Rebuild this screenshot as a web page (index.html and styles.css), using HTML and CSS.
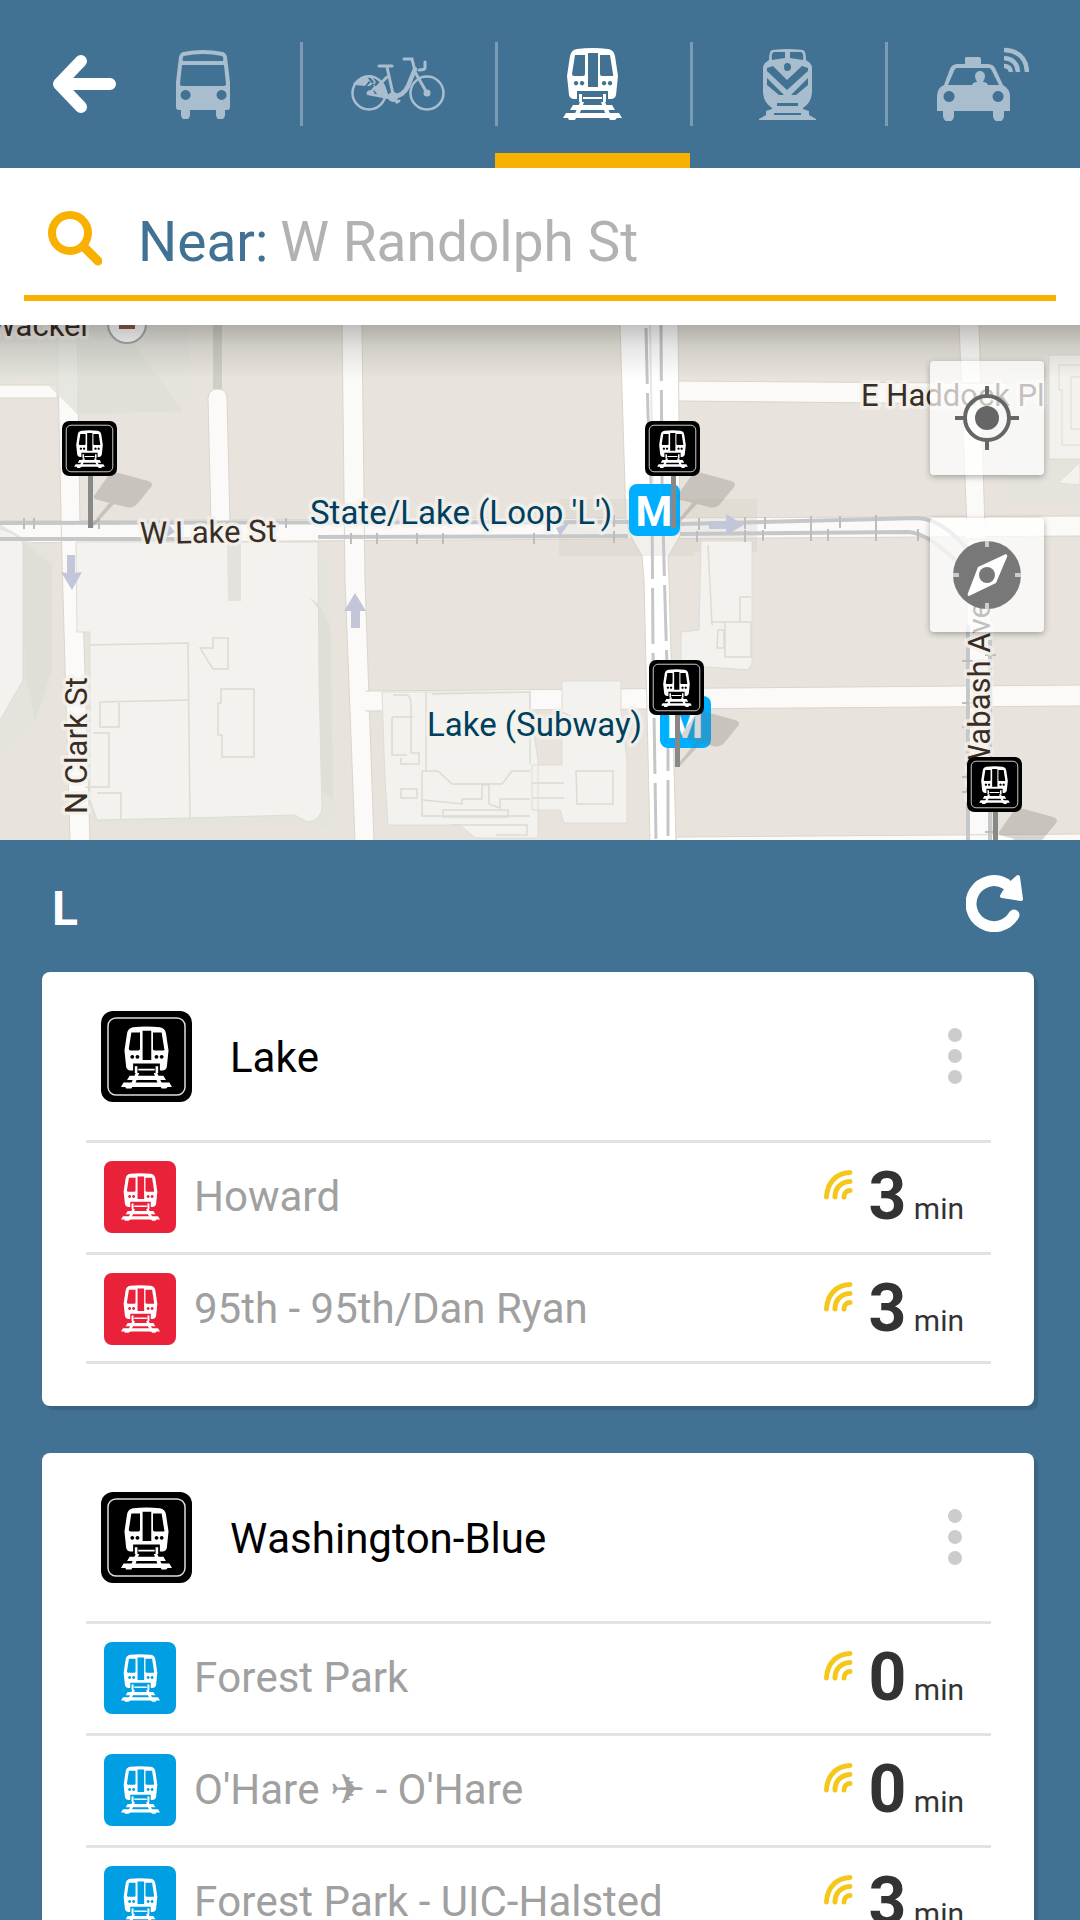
FILE: index.html
```html
<!DOCTYPE html>
<html lang="en">
<head>
<meta charset="utf-8">
<meta name="viewport" content="width=device-width, initial-scale=1">
<title>Nearby L stops</title>
<link rel="stylesheet" href="styles.css">
</head>
<body>
<svg class="sprite" aria-hidden="true">
  <symbol id="train" viewBox="0 0 59 72">
    <path fill-rule="evenodd" d="M14 1Q29.500-1 45 1Q51 2 52 8L55 28L53 47Q52 51 48 51H45V43H14V51H11Q7 51 6 47L4 28L7 8Q8 2 14 1ZM12 7L9 26Q9 28 11 28H20Q22 28 22 26V7ZM25 5V39H35V5ZM37 7V26Q37 28 39 28H49Q51 28 50 26L47 7ZM13 33a2.200 2.200 0 1 0 .1 0ZM19 33a2.200 2.200 0 1 0 .1 0ZM41 33a2.200 2.200 0 1 0 .1 0ZM47 33a2.200 2.200 0 1 0 .1 0Z"/>
    <path d="M16 46h3v8h-3zM40 46h3v8h-3zM20 49h19v2H20zM10 57H49L52 62H7ZM3 65H56L59 70H54L52 72H47L46 70H13L12 72H6L5 70H0Z"/>
    <path d="M17 54h4l-6 16h-5zM38 54h4l7 16h-5z"/>
  </symbol>
  <symbol id="badge" viewBox="0 0 91 91">
    <rect width="91" height="91" rx="12" fill="#000"/>
    <rect x="7" y="7" width="77" height="77" rx="8" fill="none" stroke="#ddd" stroke-width="1.500"/>
    <use href="#train" x="20" y="15" width="51" height="63" fill="#fff"/>
  </symbol>
  <symbol id="signal" viewBox="0 0 29 30">
    <g fill="none" stroke="#f5c71c" stroke-width="5" stroke-linecap="round"><path d="M2.500 27C3 13 12 3 26 2.500M11 27C11 18 17 12 26 11.500M20 27C20 23 23 20.500 26 20.500"/></g>
  </symbol>
</svg>

<div class="app">
  <header class="topbar">
    <button class="back" aria-label="Back">
      <svg width="64" height="58" viewBox="0 0 64 58" fill="none" stroke="#fff" stroke-width="12" stroke-linecap="round" stroke-linejoin="round"><path d="M57 29H10M28 6L6 29L28 52"/></svg>
    </button>
    <nav class="tabs" aria-label="Transit modes">
      <button class="tab" aria-label="Bus">
        <svg width="54" height="69" viewBox="0 0 54 69"><path fill-rule="evenodd" d="M7 2Q27-2 47 2Q50 3 51 7L54 32V57Q54 60 51 60H49V65A4.500 4.500 0 0 1 40 65V60H14V65A4.500 4.500 0 0 1 5 65V60H3Q0 60 0 57V32L3 7Q4 3 7 2ZM8 6Q27 2 46 6Q48 7 47 11H7Q6 7 8 6ZM6 15H48L50 34Q50 36 48 36H6Q4 36 4 34ZM9.500 40a5 5 0 1 0 .1 0ZM45.500 40a5 5 0 1 0 .1 0Z"/></svg>
      </button>
      <button class="tab" aria-label="Bike">
        <svg width="94" height="54" viewBox="0 0 94 54"><g fill="none" stroke="currentColor" stroke-width="2.500"><circle cx="18" cy="36" r="16.500"/><circle cx="76" cy="36" r="16.500"/></g><path fill-rule="evenodd" d="M2 27Q10 17 20 18Q33 22 37 37L42 39V43L16 38Q15 33 20 33L24 28L18 24L14 29L4 28ZM16 20L20 25L16 29H19L23 25L19 20ZM21 20L25 25L22 29H25L29 25L25 20ZM23 33L26 37H21Z"/><g fill="none" stroke="currentColor" stroke-linecap="round"><path stroke-width="3" d="M28 9H41M36 10L42 37M17 36H22"/><path stroke-width="4.500" d="M41 39Q52 40 57 29L64 12"/><path stroke-width="3" d="M53 2H61L64 14M64 15L76 36M74 5V11Q74 13 68 13M36 20L30 26"/><path stroke-width="3" d="M42 40L46 45L48 44"/></g><circle cx="76" cy="36" r="3.500"/><circle cx="42" cy="40" r="5"/></svg>
      </button>
      <button class="tab tab-active" aria-label="L" aria-current="page">
        <svg width="59" height="72"><use href="#train"/></svg>
      </button>
      <button class="tab" aria-label="Metra">
        <svg width="57" height="71" viewBox="0 0 57 71"><path fill-rule="evenodd" d="M13 1Q28-1 44 1Q47 2 47 11L51 14Q53 16 53 20V44Q52 54 44 59V60L50 62V66L57 70V71H0V70L7 66V62L13 60V59Q5 54 4 44V20Q4 16 6 14L10 11Q10 2 13 1ZM15 3Q12 4 13 11L26 9V3ZM31 3V9L44 11Q45 4 42 3ZM28 14Q25 14 25 18Q25 22 28 22Q32 22 32 18Q32 14 28 14ZM8 19L14 17L28 31L43 17L49 19V22L28 41L8 22ZM8 29L25 46H20L8 36ZM49 29L32 46H37L49 36ZM18 54V57H39V54ZM15 64V66H42V64Z"/></svg>
      </button>
      <button class="tab" aria-label="Taxi">
        <svg width="93" height="74" viewBox="0 0 93 74"><path fill-rule="evenodd" d="M30 10H43Q45 10 45 12V17H52Q58 17 60 23L67 38Q74 42 74 49V64H68V69A5.500 5.500 0 0 1 57 69V64H18V69A5.500 5.500 0 0 1 7 69V64H1V49Q1 41 8 38L14 22Q16 17 22 17H29V12Q29 10 30 10ZM21 21Q19 21 18 24L12 38H36Q37 35 41 35Q39 32 39 29A5 5 0 0 1 49 29Q49 32 47 35Q51 35 52 38H63L56 24Q55 21 53 21ZM13 44a5.500 5.500 0 1 0 .1 0ZM62 44a5.500 5.500 0 1 0 .1 0Z"/><g fill="none" stroke="currentColor" stroke-width="4.500"><path d="M68 3Q90 4 91 25M68 11Q81 12 82 25M68 19Q74 19 75 25"/></g></svg>
      </button>
    </nav>
  </header>

  <div class="search">
    <div class="search-field">
      <svg class="search-icon" width="55" height="56" viewBox="0 0 55 56" fill="none" stroke="#f8b100" stroke-linecap="round"><circle cx="23" cy="23" r="18" stroke-width="8"/><path d="M37 37L51 51" stroke-width="9"/></svg>
      <label for="near">Near:</label>
      <input id="near" type="text" value="W Randolph St">
    </div>
  </div>

  <section class="map" aria-label="Map">
    <svg class="map-canvas" viewBox="0 325 1080 515" preserveAspectRatio="xMidYMid slice">
      <defs>
        <linearGradient id="shade" x1="0" y1="0" x2="0" y2="1"><stop offset="0" stop-color="#000" stop-opacity=".24"/><stop offset=".4" stop-color="#000" stop-opacity=".1"/><stop offset="1" stop-color="#000" stop-opacity="0"/></linearGradient>
        <g id="pin">
          <path d="M32 75L46 55Q50 50 57 52L86 60Q92 62 89 66L76 82Q71 88 64 86L36 79Q31 78 32 75ZM29 104L48 81L52 83L31 106Z" fill="#777068" fill-opacity=".28"/>
          <rect x="26" y="53" width="5" height="54" fill="#888"/>
          <use href="#badge" width="55" height="55"/>
        </g>
      </defs>
      <rect y="325" width="1080" height="515" fill="#e8e4dd"/>
      <!-- streets -->
      <g fill="#fbfaf8" stroke="#dbd5c9" stroke-width="1">
        <path d="M-2 385H57V398H-2ZM-2 521L1082 516V536L-2 543Z"/>
        <path d="M57 325H77L80 523L84 640L90 842H70L62 560Z"/>
        <path d="M208 398Q209 389 217 389Q227 389 227 398L230 523H211Z"/>
        <path d="M342 323H362L365 580L374 842H355L345 580Z"/>
        <path d="M959 323H979L985 530H967ZM967 540H991V842H967Z"/>
        <path d="M678 381L1082 384V405L678 401Z"/>
        <path d="M366 691L1082 685V706L366 711ZM676 837L1082 834V842H676Z"/>
        <path fill="#fff" d="M620 323H678L680 520V536L668 557L669 580L676 842H650L644 580L642 556L631 537L626 520Z"/>
      </g>
      <path d="M213 325h9v64h-9z" fill="#cfcfc5"/>
      <g fill="#fbfaf8"><path d="M62 522H84V542H62ZM345 520H364V542H346ZM965 519H985V538H966ZM352 692H370V710H352ZM648 690H672V707H648ZM968 687H990V705H968Z"/></g>
      <!-- buildings -->
      <g fill="#e2e2dc" fill-opacity=".8"><path d="M0 325H190V401H183V411L77 414L41 378L0 380Z"/><path d="M77 345H135L183 411L77 414Z" fill="#dfdfd8"/><path d="M0 524L52 555V690L35 722L0 759Z"/><path d="M318 541L331 570V620L334 670V815L328 828L300 822L110 826L90 818L318 800Z"/><path d="M559 499H757V552H695V556H559Z" fill="#d2ccc3" fill-opacity=".3"/><path d="M1006 370H1048L1080 430V503H1006Z"/></g>
      <g fill="#f3f2ee" stroke="#dddcd6" stroke-width="1">
        <path d="M76 542H318L319 680L322 810Q318 822 307 822L295 815L190 818L97 820L90 800V632L77 632Z"/>
        <path d="M-2 528L14 534L23 543V680L-2 724Z"/>
        <path d="M382 692H530V710L538 760V838H475L460 825H388L385 780ZM562 681H621V712L627 760V823H564L560 810H532V765H562ZM701 541H752V664L748 670L681 665V632L699 630Z"/>
        <path d="M1049 355H1082V459H1049ZM1059 365H1082V445H1062V390H1059ZM1071 377H1082V429H1071ZM1058 483L1080 462V485Z"/>
      </g>
      <g fill="#dddcd5"><path d="M227 542H241V601H228ZM23 542L34 550L52 565V670L35 720L25 674ZM310 598L318 603L330 625L333 800L321 790L319 610Z" fill-opacity=".75"/></g>
      <g fill="none" stroke="#dcdcd5" stroke-width="1.500">
        <path d="M90 645L188 643L190 818M100 702L188 700M100 702V727H119V703M93 733H109V787H85M97 793H121V820M200 648H213V638H228V669H213ZM221 689H254V757H222V735H218V703H221ZM393 695H407Q411 697 411 705V753H419V764H401V758M392 717V755H407M392 717H413M401 789H417V798H401ZM422 771H438L452 784H502L512 771H530M422 771V816H530M423 800L462 804V799H482V785H489V804L500 808V799H530M443 810H508V817H443ZM451 825H527V835H496M576 771H613V804H577ZM532 783H564M532 798H564M708 545L712 625V622H740V597H751M725 622H751V657H725V623M718 630H724V648H717ZM426 692V770M432 694L530 692V764M562 712L622 740"/>
      </g>
      <!-- elevated tracks -->
      <g fill="none" stroke="#c6c7c9" stroke-width="4">
        <path d="M0 523L630 522M680 524L918 518Q945 520 970 553M0 539H210M318 537L628 536M680 534L908 532Q930 533 965 570"/>
        <path d="M968 625V840M990 640V840"/>
      </g>
      <g fill="none" stroke="#bcbdbf" stroke-width="2">
        <path d="M24 518V529M34 518V529M99 519V529M286 518V528M351 533V544M377 533V544M417 533V544M443 533V544M534 533V544M614 515V527M614 531V543M699 518V530M697 531V542M745 517V529M745 530V542M765 517V529M763 530V541M811 516V529M811 529V541M840 516V528M828 529V541M876 515V528M876 528V541M918 529V541M962 661H973M962 703H973M962 727H973M962 777H973M962 792H973M985 655H996M985 832H996"/>
      </g>
      <g fill="none" stroke="#c6c6c8" stroke-width="3" stroke-dasharray="56 9">
        <path d="M646 328L648 415L652 500L653 650L656 840M661 325L662 485L665 600L668 700V840"/>
      </g>
      <path d="M650 325L653 500" stroke="#ebe6df" stroke-width="2"/>
      <g fill="#c2c6d8"><path d="M67 555H75V573L82 572L72 590L61 572L67 573ZM351 628V611H344L355 593L366 611H360V628ZM709 521H726V514L744 525L726 535V529H709ZM145 525H165V520L175 532L165 538V534H145ZM556 528L570 522L560 536Z"/></g>
      <!-- place of interest -->
      <circle cx="127" cy="324" r="19" fill="#fff" stroke="#aaa" stroke-width="2"/><path d="M119 319H135V329H119Z" fill="#8f564d"/>
      <!-- labels -->
      <g class="map-label">
        <text x="91" y="336" text-anchor="end" class="label-street">Wacker</text>
        <text x="140" y="544" class="label-street" transform="rotate(-1 140 544)">W Lake St</text>
        <text x="861" y="406" class="label-street">E Haddock Pl</text>
        <text x="87" y="814" class="label-street" transform="rotate(-90 87 814)">N Clark St</text>
        <text x="990" y="602" text-anchor="end" class="label-street" transform="rotate(-90 990 602)">N Wabash Ave</text>
        <text x="310" y="524" class="label-station">State/Lake (Loop 'L')</text>
        <text x="427" y="736" class="label-station">Lake (Subway)</text>
      </g>
      <g class="metro">
        <rect x="629" y="484" width="51" height="52" rx="8"/><text x="654" y="526">M</text>
        <rect x="660" y="696" width="51" height="52" rx="8"/><text x="685" y="738">M</text>
      </g>
      <use href="#pin" x="62" y="421"/>
      <use href="#pin" x="645" y="421"/>
      <use href="#pin" x="649" y="660"/>
      <use href="#pin" x="967" y="757"/>
      <rect y="325" width="1080" height="54" fill="url(#shade)"/>
    </svg>
    <div class="map-controls">
      <button class="map-button" aria-label="My location">
        <svg width="66" height="66" viewBox="0 0 66 66"><circle cx="33" cy="33" r="22" fill="none" stroke="#666" stroke-width="4"/><circle cx="33" cy="33" r="12" fill="#666"/><path d="M33 1V11M33 55V65M1 33H11M55 33H65" stroke="#666" stroke-width="4"/></svg>
      </button>
      <button class="map-button" aria-label="Compass">
        <svg width="68" height="68" viewBox="0 0 68 68"><circle cx="34" cy="34" r="34" fill="#787878"/><path d="M34 0V6M0 34H6M62 34H68M34 62V68" stroke="#ccc" stroke-width="4"/><path d="M53 13Q55 14 54 16L43 42L16 55Q14 55 15 52L25 26Z" fill="#fff"/><circle cx="34" cy="34" r="8" fill="#787878"/></svg>
      </button>
    </div>
  </section>

  <main class="results">
    <div class="results-head">
      <h1>L</h1>
      <button class="refresh" aria-label="Refresh">
        <svg width="58" height="58" viewBox="0 0 58 58"><path d="M48 41A23 23 0 1 1 40 10" fill="none" stroke="#fff" stroke-width="11" stroke-linecap="round"/><path d="M52 3L55 25L36 22L42 12Z" fill="#fff" stroke="#fff" stroke-width="4" stroke-linejoin="round"/></svg>
      </button>
    </div>

    <article class="card">
      <header class="stop">
        <svg class="stop-icon" width="91" height="91"><use href="#badge"/></svg>
        <h2>Lake</h2>
        <button class="more" aria-label="More options for Lake"><i></i><i></i><i></i></button>
      </header>
      <ul class="routes">
        <li class="route"><span class="line line-red"><svg width="39" height="48"><use href="#train"/></svg></span><span class="destination">Howard</span><svg class="live" width="29" height="30"><use href="#signal"/></svg><span class="eta"><b>3</b> min</span></li>
        <li class="route"><span class="line line-red"><svg width="39" height="48"><use href="#train"/></svg></span><span class="destination">95th - 95th/Dan Ryan</span><svg class="live" width="29" height="30"><use href="#signal"/></svg><span class="eta"><b>3</b> min</span></li>
      </ul>
    </article>

    <article class="card">
      <header class="stop">
        <svg class="stop-icon" width="91" height="91"><use href="#badge"/></svg>
        <h2>Washington-Blue</h2>
        <button class="more" aria-label="More options for Washington-Blue"><i></i><i></i><i></i></button>
      </header>
      <ul class="routes">
        <li class="route"><span class="line line-blue"><svg width="39" height="48"><use href="#train"/></svg></span><span class="destination">Forest Park</span><svg class="live" width="29" height="30"><use href="#signal"/></svg><span class="eta"><b>0</b> min</span></li>
        <li class="route"><span class="line line-blue"><svg width="39" height="48"><use href="#train"/></svg></span><span class="destination">O'Hare ✈ - O'Hare</span><svg class="live" width="29" height="30"><use href="#signal"/></svg><span class="eta"><b>0</b> min</span></li>
        <li class="route"><span class="line line-blue"><svg width="39" height="48"><use href="#train"/></svg></span><span class="destination">Forest Park - UIC-Halsted</span><svg class="live" width="29" height="30"><use href="#signal"/></svg><span class="eta"><b>3</b> min</span></li>
      </ul>
    </article>
  </main>
</div>
</body>
</html>
```
FILE: styles.css
```css
* { box-sizing: border-box; }

body {
  margin: 0;
  background: #417193;
  color: #333;
  font-family: Roboto, "DejaVu Sans", sans-serif;
}

button {
  padding: 0;
  border: 0;
  background: none;
  cursor: pointer;
}

svg { display: block; flex: none; }

h1, h2 { margin: 0; }

.sprite { position: absolute; width: 0; height: 0; }

.app {
  display: flex;
  flex-direction: column;
  height: 100vh;
  overflow: hidden;
}

/* Top bar */
.topbar {
  display: flex;
  flex: none;
  height: 168px;
}

.back {
  display: flex;
  flex: none;
  align-items: center;
  justify-content: flex-end;
  width: 117px;
  margin-right: -12px;
}

.tabs { display: flex; flex: 1; }

.tab {
  display: flex;
  flex: 1 1 0;
  align-items: center;
  justify-content: center;
  height: 168px;
  color: #a8bdcd;
  fill: currentColor;
  background: linear-gradient(#7b9cb4, #7b9cb4) left center / 3px 84px no-repeat;
}

.tab:first-child { background: none; }

.tab-active {
  color: #fff;
  border-top: 15px solid transparent;
  border-bottom: 15px solid #f8b100;
}

/* Search */
.search {
  flex: none;
  padding: 0 24px 24px;
  background: #fff;
}

.search-field {
  display: flex;
  align-items: center;
  height: 133px;
  padding: 20px 23px 0;
  border-bottom: 6px solid #f8b100;
  font-size: 55px;
}

.search-icon {
  margin: 0 36px 8px 0;
}

.search-field label { color: #417193; }

.search-field input {
  flex: 1;
  min-width: 0;
  margin-left: 12px;
  padding: 0;
  border: 0;
  outline: 0;
  background: none;
  color: #b2b2b2;
  font: inherit;
}

/* Map */
.map {
  position: relative;
  flex: none;
  aspect-ratio: 1080 / 515;
  overflow: hidden;
}

.map-canvas { width: 100%; height: 100%; }

.map-label {
  fill: #3a2d24;
  stroke: #f4f2ed;
  stroke-opacity: .8;
  stroke-width: 7px;
  stroke-linejoin: round;
  paint-order: stroke;
}

.label-street { font-size: 31px; }

.label-station {
  fill: #00405f;
  font-size: 33px;
}

.metro { fill: #00aeff; }

.metro text {
  fill: #fff;
  font-size: 42px;
  font-weight: 700;
  text-anchor: middle;
}

.map-controls {
  position: absolute;
  top: 36px;
  right: 36px;
  display: grid;
  gap: 43px;
}

.map-button {
  display: grid;
  place-items: center;
  width: 114px;
  height: 114px;
  border-radius: 4px;
  background: rgba(255, 255, 255, .7);
  box-shadow: 0 2px 6px rgba(0, 0, 0, .3);
}

/* Results */
.results {
  flex: 1;
  min-height: 0;
  padding: 0 46px 42px 42px;
  overflow-y: auto;
  font-kerning: none;
  scrollbar-width: none;
}

.results-head {
  display: flex;
  align-items: center;
  justify-content: space-between;
  height: 132px;
  padding: 0 10px 6px;
}

.results-head h1 {
  padding-top: 12px;
  color: #fff;
  font-size: 48px;
  line-height: 56px;
}

.card {
  margin-bottom: 47px;
  padding: 0 43px 42px 44px;
  border-radius: 8px;
  background: #fff;
  box-shadow: 4px 4px 1px rgba(0, 0, 0, .12);
}

.stop {
  display: flex;
  align-items: center;
  height: 171px;
  padding: 0 29px 0 15px;
  border-bottom: 3px solid #e3e3e3;
}

.stop h2 {
  flex: 1;
  padding-top: 2px;
  margin-left: 38px;
  color: #000;
  font-size: 42px;
  font-weight: 400;
}

.more { display: grid; gap: 7px; }

.more i {
  width: 14px;
  height: 14px;
  border-radius: 50%;
  background: #ccc;
}

.routes {
  margin: 0;
  padding: 0;
  list-style: none;
}

.route {
  display: flex;
  height: 112px;
  padding: 18px 27px 0 18px;
  border-bottom: 3px solid #e3e3e3;
  line-height: 72px;
}

.route:last-child { height: 109px; }

.line {
  display: grid;
  flex: none;
  place-items: center;
  width: 72px;
  height: 72px;
  border-radius: 8px;
  fill: #fff;
}

.line-red { background: #e92139; }
.line-blue { background: #009fe3; }

.destination {
  flex: 1;
  margin-left: 18px;
  color: #a0a0a0;
  font-size: 42px;
}

.live { margin: 9px 16px 0 0; }

.eta { font-size: 30px; }

.eta b { font-size: 66px; }
```
